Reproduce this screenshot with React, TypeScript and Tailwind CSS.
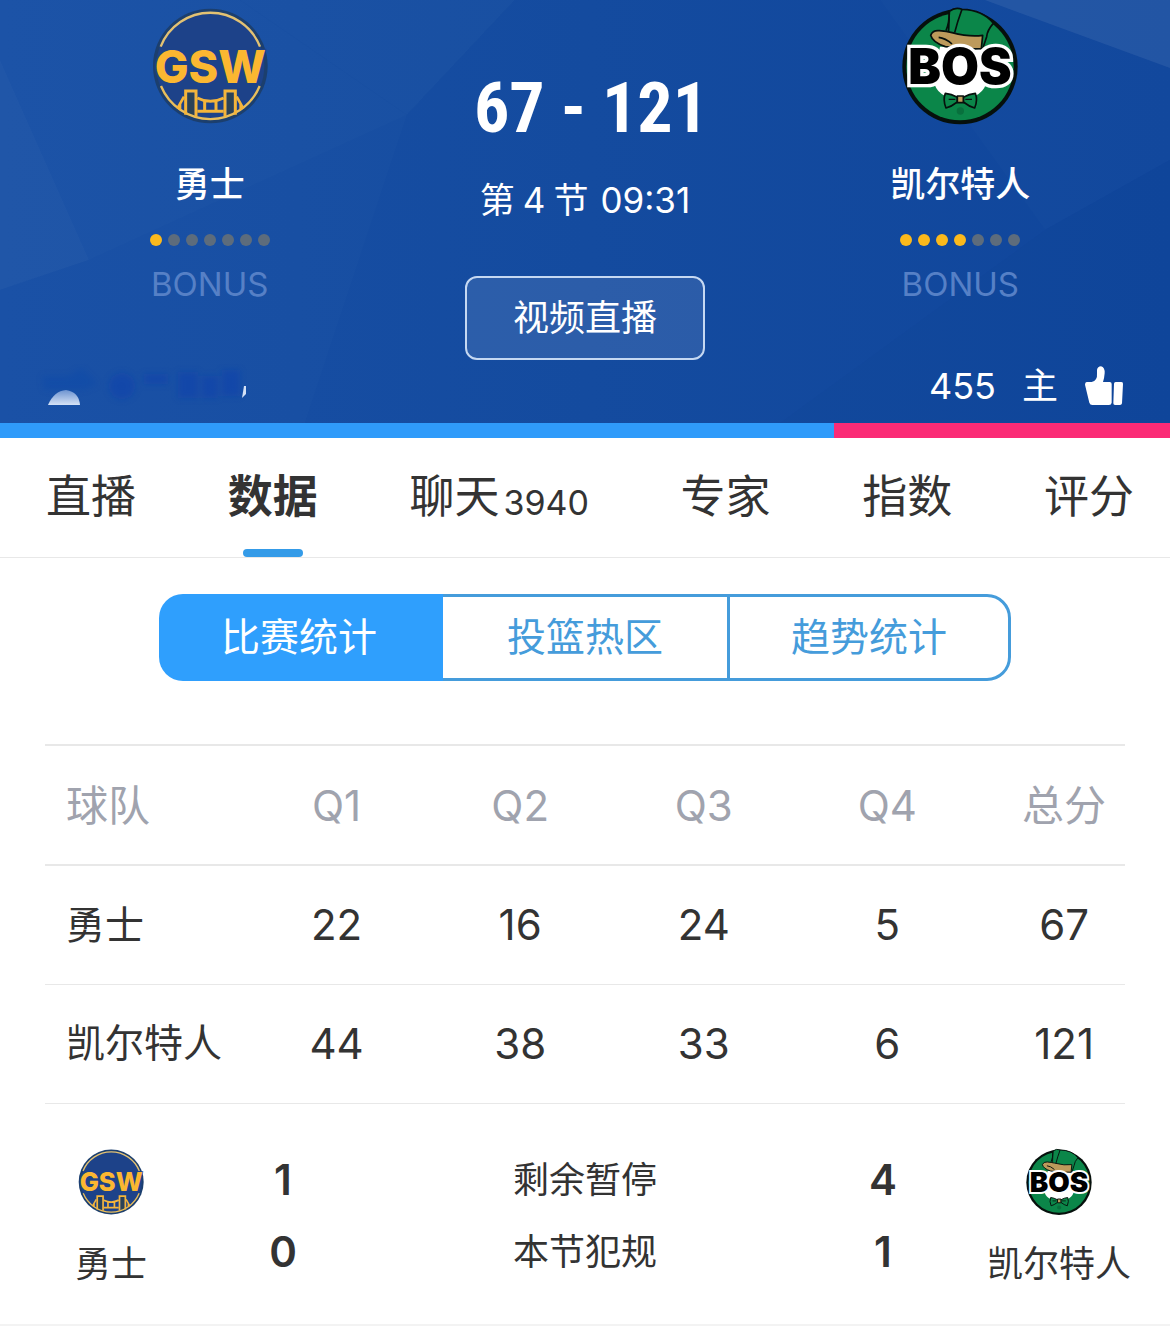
type Team = {
  name: string;
  fouls: number;
  Logo: (props: { className: string }) => React.ReactElement;
};

function GswLogo({ className }: { className: string }) {
  return (
    <svg viewBox="60 18 360 360" className={className} role="img" aria-label="GSW">
      <circle cx="241" cy="198" r="172" fill="#1c3f6e" />
      <circle cx="241" cy="198" r="162" fill="#1d4289" />
      <path d="M92 140A160 160 0 0 1 390 140" fill="none" stroke="#e3c273" strokeWidth="7" />
      <path d="M182 278V350M301 278V350" stroke="#2b4257" strokeWidth="20" />
      <path d="M93 258A160 160 0 0 0 389 258" fill="none" stroke="#e9be5b" strokeWidth="7" />
      <g fill="none" stroke="#f5b53a" strokeWidth="9">
        <path d="M167 344V273H198V350M285 350V273H316V344" />
        <path d="M162 290L142 326M320 290L340 326M150 312V330M332 312V330" strokeWidth="8" />
        <path d="M202 294Q241 314 281 294M202 334H281M224 304V334M258 304V334" />
      </g>
      <text
        x="241"
        y="248"
        textAnchor="middle"
        fontFamily="Inter, sans-serif"
        fontWeight="800"
        fontSize="135"
        fill="#fbb731"
        stroke="#1d4289"
        strokeWidth="8"
        paintOrder="stroke"
      >
        GSW
      </text>
    </svg>
  );
}

function BosLogo({ className }: { className: string }) {
  return (
    <svg viewBox="60 18 360 360" className={className} role="img" aria-label="BOS">
      <circle cx="240" cy="200" r="173" fill="#06100c" />
      <circle cx="240" cy="200" r="161" fill="#0b8649" />
      <path d="M160 240Q170 296 240 296Q310 296 322 240V140H180Z" fill="#fff" />
      <g stroke="#06100c" strokeWidth="5" strokeLinejoin="round">
        <path d="M208 34Q226 20 246 28Q310 30 340 70Q322 90 320 110L308 146L196 130L206 90Z" fill="#0b8649" />
        <path d="M216 98Q270 112 308 106L304 146Q250 148 196 140Q158 128 152 106Q158 90 178 92Q200 94 216 98Z" fill="#bd9a5b" />
        <path d="M246 28Q232 66 224 98M208 34Q208 70 198 92M176 112Q196 114 216 132" fill="none" />
        <path d="M196 280Q214 282 232 292V306Q214 320 198 324Q188 300 196 280ZM286 280Q268 282 250 292V306Q268 320 284 324Q294 300 286 280Z" fill="#0b8649" />
        <path d="M232 288H250V308H232Z" fill="#bd9a5b" />
        <path d="M206 298H226M276 298H256" fill="none" strokeWidth="4" />
      </g>
      <circle cx="241" cy="333" r="11" fill="#08703d" />
      <text
        x="240"
        y="253"
        textAnchor="middle"
        fontFamily="Inter, sans-serif"
        fontWeight="900"
        fontSize="147"
        fill="#000"
        stroke="#fff"
        strokeWidth="20"
        strokeLinejoin="miter"
        paintOrder="stroke"
      >
        BOS
      </text>
    </svg>
  );
}

function ThumbIcon() {
  return (
    <svg viewBox="0 0 114 120" className="h-10 w-10" fill="#fff" aria-hidden="true">
      <path d="M5 48H20Q38 44 36 22V12Q38 1 48 1Q60 4 59 22Q58 36 54 48H74Q80 48 80 54V110Q79 117 72 117H22Q15 117 13 110L0 56Q0 49 5 48Z" />
      <path d="M92 48H109Q115 48 114 54L111 112Q110 117 105 117H90Q85 117 85 112L87 53Q87 48 92 48Z" />
    </svg>
  );
}

function HeaderFacets() {
  return (
    <svg
      viewBox="0 0 1170 423"
      preserveAspectRatio="none"
      className="absolute inset-0 h-full w-full"
      aria-hidden="true"
    >
      <g fill="#fff">
        <path d="M0 0H240L407 115L305 423H0Z" opacity="0.01" />
        <path d="M0 0H515L407 115L89 260L0 290Z" opacity="0.01" />
        <path d="M0 60L89 260L0 290Z" opacity="0.02" />
        <path d="M240 0H515L407 115Z" opacity="0.01" />
        <path d="M985 0H1170V68Z" opacity="0.07" />
        <path d="M880 0H1170V160L1045 230Z" opacity="0.01" />
      </g>
      <path d="M1170 160L1045 230L780 423H1170Z" fill="#002a80" opacity="0.04" />
    </svg>
  );
}

function AwayFans() {
  return (
    <svg viewBox="0 0 216 44" className="h-11 w-54" aria-hidden="true">
      <defs>
        <filter id="soft" x="-20%" y="-20%" width="140%" height="140%">
          <feGaussianBlur stdDeviation="3" />
        </filter>
        <linearGradient id="dome" x1="0" y1="0" x2="0" y2="1">
          <stop offset="0" stopColor="#6d93d0" />
          <stop offset="1" stopColor="#d5e2f6" />
        </linearGradient>
      </defs>
      <g filter="url(#soft)" fill="#0b3fae" opacity="0.5">
        <path d="M10 12H36L50 4L66 20L52 26H12Z" opacity="0.5" />
        <circle cx="90" cy="22" r="13" />
        <path d="M112 10H136V20H112ZM146 8H166V34H146ZM170 12H186V34H170ZM190 6H208V32H190Z" />
      </g>
      <path d="M16 41Q22 27 34 26Q47 28 48 41Z" fill="url(#dome)" />
      <path d="M212 22H214V30L210 34Z" fill="#d5e2f6" />
    </svg>
  );
}

const away: Team = { name: "勇士", fouls: 1, Logo: GswLogo };
const home: Team = { name: "凯尔特人", fouls: 4, Logo: BosLogo };

const tabs = [
  { label: "直播" },
  { label: "数据", active: true },
  { label: "聊天", count: "3940" },
  { label: "专家" },
  { label: "指数" },
  { label: "评分" },
];

const views = [
  { label: "比赛统计", style: "rounded-l-3xl bg-[#2f9ffd] pr-1 text-white" },
  { label: "投篮热区", style: "border-y-3 border-[#459cdb] text-[#459cdb]" },
  { label: "趋势统计", style: "rounded-r-3xl border-3 border-[#459cdb] text-[#459cdb]" },
];
const quarters = ["Q1", "Q2", "Q3", "Q4"];
const rows = [
  { team: "勇士", scores: [22, 16, 24, 5], total: 67 },
  { team: "凯尔特人", scores: [44, 38, 33, 6], total: 121 },
];

function HeaderTeam({ team }: { team: Team }) {
  return (
    <div className="flex flex-col items-center">
      <team.Logo className="h-30 w-30" />
      <h2 className="mt-[38px] text-[35px] leading-10 font-medium">{team.name}</h2>
      <div className="mt-[30px] flex gap-1.5">
        {Array.from({ length: 7 }, (_, i) => (
          <span
            key={i}
            className={i < team.fouls ? "h-3 w-3 rounded-full bg-[#fbb91c]" : "h-3 w-3 rounded-full bg-[#5d6c7c]"}
          />
        ))}
      </div>
      <p className="mt-4 text-[33px] leading-11 text-[#5680c6]">BONUS</p>
    </div>
  );
}

function TeamBadge({ team }: { team: Team }) {
  return (
    <div className="flex flex-col items-center">
      <team.Logo className="h-17 w-17" />
      <span className="mt-6 text-4xl leading-12 whitespace-nowrap">{team.name}</span>
    </div>
  );
}

function Tally({ values }: { values: number[] }) {
  return (
    <div className="flex flex-col items-center gap-6 text-[42px] leading-12 font-semibold">
      {values.map((v, i) => (
        <span key={i}>{v}</span>
      ))}
    </div>
  );
}

export default function App() {
  const share = 71.3;
  return (
    <div className="min-h-screen bg-white font-['Inter','Noto_Sans_CJK_SC',sans-serif] text-[#333]">
      <header className="relative bg-linear-to-r from-[#184fa5] via-[#144b9f] to-[#10469c] text-white">
        <HeaderFacets />
        <div className="relative grid grid-cols-3 px-[22px] pt-1.5">
          <HeaderTeam team={away} />
          <div className="flex flex-col items-center">
            <p className="mt-[62px] flex gap-4 pl-3 font-['Roboto_Condensed','Roboto',sans-serif] text-[70px] leading-20 font-bold whitespace-nowrap">
              <span>67</span>
              <span>-</span>
              <span>121</span>
            </p>
            <p className="mt-7 flex gap-2 text-[35px] leading-12 whitespace-nowrap">
              <span>第</span>
              <span>4</span>
              <span>节</span>
              <span className="ml-1">09:31</span>
            </p>
            <button className="mt-13 h-21 w-60 rounded-xl border-2 border-[#c5d8f2] bg-white/10 text-4xl">
              视频直播
            </button>
          </div>
          <HeaderTeam team={home} />
        </div>
        <div className="relative flex items-center justify-between pt-0.5 pr-[46px] pb-[13px] pl-8">
          <AwayFans />
          <button className="flex items-center gap-[26px] text-4xl leading-12">
            <span>455</span>
            <span className="leading-12">主</span>
            <ThumbIcon />
          </button>
        </div>
      </header>
      <div className="flex h-[15px] bg-[#fb2b76]">
        <div className="bg-[#2f9bfa]" style={{ width: `${share}%` }} />
      </div>

      <nav className="flex h-30 justify-between border-b border-[#e8e8e8] pr-9 pl-[46px]">
        {tabs.map((t) => (
          <a
            key={t.label}
            href="#"
            className={
              t.active
                ? "relative flex items-center pb-0.5 text-[45px] leading-none font-bold"
                : "relative flex items-center pb-0.5 text-[45px] leading-none"
            }
          >
            {t.label}
            {t.count && <span className="mt-3 ml-1 text-[34px]">{t.count}</span>}
            {t.active && (
              <span className="absolute bottom-0 left-1/2 h-2 w-15 -translate-x-1/2 rounded bg-[#349be8]" />
            )}
          </a>
        ))}
      </nav>

      <main>
        <div className="mx-[159px] mt-9 grid h-[87px] grid-cols-3 text-[39px]">
          {views.map((v) => (
            <button key={v.label} className={v.style}>
              {v.label}
            </button>
          ))}
        </div>

        <div className="mt-[63px] px-[45px]">
          <table className="w-full table-fixed border-t-2 border-[#e8e8e8] text-center text-[42px]">
            <colgroup>
              <col className="w-[18.5%]" />
              <col className="w-[17%]" />
              <col className="w-[17%]" />
              <col className="w-[17%]" />
              <col className="w-[17%]" />
              <col />
            </colgroup>
            <thead className="text-[#a0a3ae]">
              <tr className="h-30 border-b-2 border-[#e8e8e8]">
                <th className="pl-[21px] text-left font-normal whitespace-nowrap">球队</th>
                {quarters.map((q) => (
                  <th key={q} className="font-normal">
                    {q}
                  </th>
                ))}
                <th className="pl-6 font-normal whitespace-nowrap">总分</th>
              </tr>
            </thead>
            <tbody>
              {rows.map((r) => (
                <tr key={r.team} className="h-[119px] border-b border-[#e8e8e8]">
                  <th className="pl-[21px] text-left text-[39px] font-normal whitespace-nowrap">{r.team}</th>
                  {r.scores.map((s, i) => (
                    <td key={i}>{s}</td>
                  ))}
                  <td className="pl-6">{r.total}</td>
                </tr>
              ))}
            </tbody>
          </table>
        </div>

        <section className="grid grid-cols-[222px_122px_1fr_122px_222px] border-b-2 border-[#f3f3f3] pt-11 pb-9">
          <TeamBadge team={away} />
          <div className="pt-2">
            <Tally values={[1, 0]} />
          </div>
          <div className="flex flex-col items-center gap-6 pt-2 text-4xl">
            <span className="leading-12">剩余暂停</span>
            <span className="leading-12">本节犯规</span>
          </div>
          <div className="pt-2 pr-2">
            <Tally values={[4, 1]} />
          </div>
          <TeamBadge team={home} />
        </section>
      </main>
    </div>
  );
}
